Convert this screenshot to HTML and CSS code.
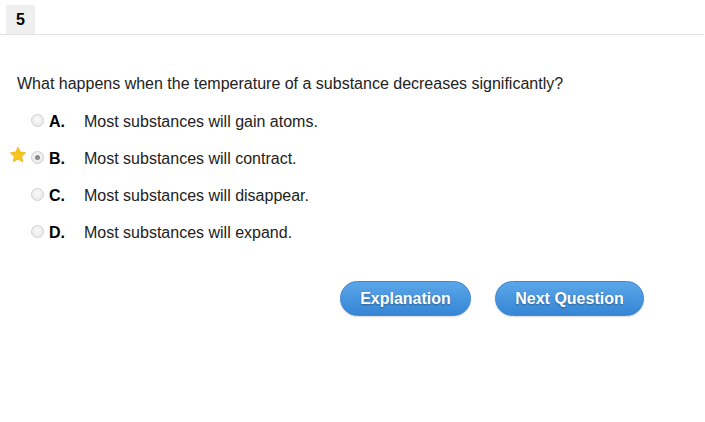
FILE: index.html
```html
<!DOCTYPE html>
<html>
<head>
<meta charset="utf-8">
<link rel="stylesheet" href="styles.css">
</head>
<body>
<div class="header">
  <div class="tab">5</div>
</div>
<div class="content">
  <p class="question">What happens when the temperature of a substance decreases significantly?</p>
  <ul class="options">
    <li class="option"><span class="radio"></span><span class="letter">A.</span><span class="text">Most substances will gain atoms.</span></li>
    <li class="option starred"><svg class="star" viewBox="0 0 24 24" width="18" height="18"><path d="M12 1.5l3.1 6.6 7.2.9-5.3 5 1.4 7.1L12 17.6l-6.4 3.5 1.4-7.1-5.3-5 7.2-.9z" fill="#f7c51c" stroke="#e0a800" stroke-width="0.8" stroke-linejoin="round"/></svg><span class="radio checked"></span><span class="letter">B.</span><span class="text">Most substances will contract.</span></li>
    <li class="option"><span class="radio"></span><span class="letter">C.</span><span class="text">Most substances will disappear.</span></li>
    <li class="option"><span class="radio"></span><span class="letter">D.</span><span class="text">Most substances will expand.</span></li>
  </ul>
  <div class="actions">
    <button class="btn btn-expl">Explanation</button>
    <button class="btn btn-next">Next Question</button>
  </div>
</div>
</body>
</html>
```
FILE: styles.css
```css
* { box-sizing: border-box; }
html, body { margin: 0; padding: 0; background: #fff; }
body {
  font-family: Arial, "Liberation Sans", sans-serif;
  color: #222;
  width: 705px;
  height: 422px;
  overflow: hidden;
}
.header {
  padding: 5px 0 0 6px;
  border-bottom: 1px solid #e3e3e3;
  height: 35px;
  margin-right: 1px;
}
.tab {
  width: 29px;
  height: 29px;
  background: #efefef;
  font-weight: bold;
  font-size: 16px;
  color: #000;
  display: flex;
  align-items: center;
  justify-content: center;
}
.content {
  padding: 0 0 0 17px;
}
.question {
  margin: 39px 0 0 0;
  font-size: 16px;
  line-height: 20px;
  color: #222;
}
.options {
  list-style: none;
  margin: 9px 0 0 0;
  padding: 0;
}
.option {
  display: flex;
  align-items: center;
  height: 37px;
  font-size: 16px;
  color: #222;
  padding-left: 14px;
  position: relative;
}
.star {
  position: absolute;
  left: -8px;
  top: 6px;
}
.radio {
  width: 13px;
  height: 13px;
  border-radius: 50%;
  border: 1px solid #d0d0d0;
  background: radial-gradient(circle at 50% 40%, #fafafa, #e4e4e4);
  margin-right: 5px;
  display: flex;
  align-items: center;
  justify-content: center;
  position: relative;
  top: -1px;
  flex-shrink: 0;
}
.radio.checked::after {
  content: "";
  width: 5px;
  height: 5px;
  border-radius: 50%;
  background: #8a8a8a;
}
.letter {
  font-weight: bold;
  color: #000;
  width: 35px;
}
.actions {
  display: flex;
  gap: 24px;
  margin: 30px 0 0 323px;
}
.btn {
  font-family: Arial, "Liberation Sans", sans-serif;
  font-weight: bold;
  font-size: 16px;
  color: #fff;
  text-shadow: 0 1px 2px rgba(0,0,0,0.35);
  height: 35px;
  border: 1px solid #3f86cc;
  border-radius: 18px;
  background: linear-gradient(#5aa6e8, #3686d6);
  box-shadow: 0 1px 2px rgba(0,0,0,0.15);
  padding: 0;
  cursor: pointer;
}
.btn-expl { width: 131px; }
.btn-next { width: 149px; }
```
